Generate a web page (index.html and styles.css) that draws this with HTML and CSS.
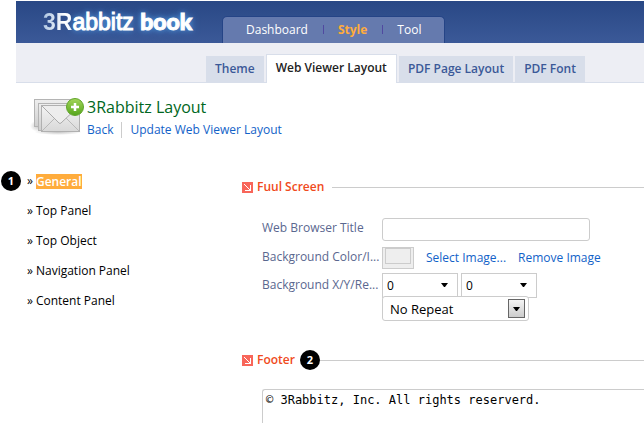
FILE: index.html
```html
<!DOCTYPE html>
<html lang="en">
<head>
<meta charset="utf-8">
<title>3Rabbitz Layout</title>
<link rel="stylesheet" href="styles.css">
</head>
<body>
<header class="masthead">
  <div class="logo"><span class="logo-mark">3R</span><span class="logo-name">abbitz</span> <span class="logo-product">book</span></div>
  <nav class="main-nav" aria-label="Main">
    <a href="#">Dashboard</a>
    <a href="#" class="current">Style</a>
    <a href="#">Tool</a>
  </nav>
</header>
<nav class="tabs" aria-label="Style">
  <a href="#">Theme</a>
  <a href="#" class="active">Web Viewer Layout</a>
  <a href="#">PDF Page Layout</a>
  <a href="#">PDF Font</a>
</nav>
<section class="title">
  <svg class="title-icon" width="56" height="40" viewBox="0 0 56 40" aria-hidden="true">
    <defs>
      <linearGradient id="paper" x1="0" y1="0" x2="0" y2="1"><stop offset="0" stop-color="#eee"/><stop offset="1" stop-color="#cfcfcf"/></linearGradient>
      <linearGradient id="fold" x1="0" y1="0" x2="0" y2="1"><stop offset="0" stop-color="#f4f4f4"/><stop offset="1" stop-color="#d8d8d8"/></linearGradient>
      <linearGradient id="plus" x1="0" y1="0" x2="0" y2="1"><stop offset="0" stop-color="#a4d65a"/><stop offset="1" stop-color="#55a51c"/></linearGradient>
      <radialGradient id="shade"><stop offset="0" stop-color="#999" stop-opacity=".6"/><stop offset="1" stop-color="#999" stop-opacity="0"/></radialGradient>
    </defs>
    <ellipse cx="9" cy="30" rx="9" ry="6" fill="url(#shade)"/>
    <ellipse cx="28" cy="36" rx="24" ry="3" fill="url(#shade)"/>
    <rect x="4.500" y="3.500" width="39" height="27" fill="url(#paper)" stroke="#b4b4b4"/>
    <rect x="8.500" y="7.500" width="39" height="27" fill="url(#paper)" stroke="#b4b4b4"/>
    <rect x="11.500" y="9.500" width="38" height="26" fill="url(#fold)" stroke="#b0b0b0"/>
    <path d="M12 35L25 22M49 35L36 22" stroke="#b8b8b8" fill="none"/>
    <path d="M12 10L29 27Q30 28 31 27L49 10" stroke="#aaa" fill="#ededed"/>
    <circle cx="45" cy="11" r="8.500" fill="url(#plus)" stroke="#61a52b"/>
    <path d="M45 7v8M41 11h8" stroke="#fff" stroke-width="2.500"/>
  </svg>
  <div>
    <h1>3Rabbitz Layout</h1>
    <div class="actions"><a href="#">Back</a><a href="#">Update Web Viewer Layout</a></div>
  </div>
</section>
<main class="content">
  <nav class="side" aria-label="Sections">
    <ul>
      <li class="selected"><span class="badge badge-side">1</span><a href="#">General</a></li>
      <li><a href="#">Top Panel</a></li>
      <li><a href="#">Top Object</a></li>
      <li><a href="#">Navigation Panel</a></li>
      <li><a href="#">Content Panel</a></li>
    </ul>
  </nav>
  <form class="settings">
    <h2>
      <svg width="11" height="11" viewBox="0 0 11 11" shape-rendering="crispEdges" aria-hidden="true"><path fill="#f8665a" d="M0 0h11v11H0z"/><path fill="#fff" d="M2 2h1v1H2zM3 3h1v1H3zM4 4h1v1H4zM5 5h1v1H5zM6 6h1v1H6zM7 7h1v1H7zM8 3h1v6H8zM3 8h5v1H3z"/></svg>
      <span>Fuul Screen</span>
    </h2>
    <div class="fields">
      <label for="browser-title">Web Browser Title</label>
      <input id="browser-title" class="text" type="text">
      <label for="bg-color">Background Color/I...</label>
      <div class="image-row">
        <button id="bg-color" class="swatch" type="button" aria-label="Background color"><span></span></button>
        <a href="#">Select Image...</a>
        <a href="#">Remove Image</a>
      </div>
      <label for="bg-x">Background X/Y/Re...</label>
      <div class="position">
        <div class="pair">
          <div class="combo"><select id="bg-x"><option>0</option></select><svg width="7" height="4" viewBox="0 0 7 4" aria-hidden="true"><path d="M0 0h7L4 4H3z"/></svg></div>
          <div class="combo"><select aria-label="Background Y"><option>0</option></select><svg width="7" height="4" viewBox="0 0 7 4" aria-hidden="true"><path d="M0 0h7L4 4H3z"/></svg></div>
        </div>
        <div class="combo repeat"><select aria-label="Background repeat"><option>No Repeat</option></select><span class="drop"><svg width="7" height="4" viewBox="0 0 7 4" aria-hidden="true"><path d="M0 0h7L4 4H3z"/></svg></span></div>
      </div>
    </div>
    <h2 class="footer-heading">
      <svg width="11" height="11" viewBox="0 0 11 11" shape-rendering="crispEdges" aria-hidden="true"><path fill="#f8665a" d="M0 0h11v11H0z"/><path fill="#fff" d="M2 2h1v1H2zM3 3h1v1H3zM4 4h1v1H4zM5 5h1v1H5zM6 6h1v1H6zM7 7h1v1H7zM8 3h1v6H8zM3 8h5v1H3z"/></svg>
      <span>Footer</span><span class="badge">2</span>
    </h2>
    <textarea aria-label="Footer" rows="2">© 3Rabbitz, Inc. All rights reserverd.</textarea>
  </form>
</main>
</body>
</html>
```
FILE: styles.css
```css
* { box-sizing: border-box; }
body {
  display: flex;
  flex-direction: column;
  height: 100vh;
  margin: 0;
  padding: 1px 0 0 16px;
  overflow: hidden;
  background: #fff;
  color: #000;
  font: 12px/20px "Open Sans", "Noto Sans", sans-serif;
}
a { color: #1262c8; text-decoration: none; }

.masthead {
  display: flex;
  flex: none;
  align-items: flex-end;
  height: 42px;
  padding-left: 27px;
  background: linear-gradient(#294885, #3b5998);
}
.logo {
  width: 179px;
  padding-bottom: 8px;
  color: #fff;
  font: 23px/26px "Liberation Sans", sans-serif;
  white-space: nowrap;
  text-shadow: 0 0 5px #4f95dc, 0 0 8px #4f95dc;
}
.logo-mark {
  font-weight: bold;
  color: transparent;
  background: linear-gradient(100deg, #a5c0e0, #fff 70%);
  background-clip: text;
  text-shadow: none;
}
.logo-name { -webkit-text-stroke: 1px #fff; }
.logo-product { font: 900 23px/24px Lato, sans-serif; -webkit-text-stroke: 1px #fff; }
.main-nav {
  display: flex;
  height: 27px;
  padding: 0 8px;
  border: 1px solid #254486;
  border-bottom: 0;
  border-radius: 5px 5px 0 0;
  background: #657aae;
}
.main-nav a { position: relative; padding: 3px 15px; color: #fff; }
.main-nav a + a::before {
  content: "";
  position: absolute;
  left: 0;
  top: 8px;
  height: 9px;
  border-left: 1px solid #5049a0;
}
.main-nav .current { color: #ffac3c; font-weight: bold; }

.tabs {
  display: flex;
  flex: none;
  align-items: flex-end;
  gap: 2px;
  height: 40px;
  padding-left: 190px;
  border-bottom: 1px solid #d8deea;
  background: #edeef4;
}
.tabs a {
  height: 26px;
  padding: 0 9px;
  background: #d8deea;
  color: #3b5998;
  font-weight: 600;
  line-height: 26px;
  white-space: nowrap;
}
.tabs .active {
  height: 29px;
  margin-bottom: -1px;
  border: 1px solid #d8deea;
  border-bottom: 0;
  background: #fff;
  color: #222;
}

.title { display: flex; gap: 1px; padding: 13px 0 0 14px; }
.title h1 { margin: 0; color: #006621; font-size: 16px; font-weight: normal; line-height: 22px; }
.actions { display: flex; align-items: center; line-height: 24px; }
.actions a + a { margin-left: 8px; padding-left: 8px; border-left: 1px solid #ccc; line-height: 16px; }

.content { display: grid; flex: 1; min-height: 0; grid-template-columns: 226px 1fr; grid-template-rows: 100%; padding-top: 29px; }
.side ul { margin: 0; padding: 0; list-style: none; }
.side li { position: relative; display: flex; gap: 3px; height: 30px; padding-left: 11px; }
.side li::before { content: "»"; }
.side a { color: #000; }
.side .selected a { height: 15px; margin-top: 3px; background: #ffac3c; color: #fff; font-weight: 600; line-height: 15px; }
.badge {
  width: 20px;
  height: 20px;
  border-radius: 50%;
  background: #000;
  color: #fff;
  font-size: 11px;
  font-weight: bold;
  line-height: 20px;
  text-align: center;
}
.badge-side { position: absolute; left: -15px; top: 0; }

.settings { display: flex; flex-direction: column; min-height: 0; }
.settings h2 { display: flex; align-items: center; gap: 4px; margin: 6px 0 0; color: #f04a20; font-size: 12px; font-weight: 600; line-height: 20px; }
.settings h2::after { content: ""; flex: 1; margin-left: 4px; border-top: 1px solid #ccc; }
.settings .footer-heading { margin-top: 29px; }
.footer-heading .badge { margin-left: 1px; }
.settings .footer-heading::after { margin-left: -4px; }
.fields { display: grid; grid-template-columns: 114px 1fr; gap: 6px; padding: 21px 0 0 20px; }
.fields label { color: #5a678f; line-height: 20px; white-space: nowrap; }
.fields .text { width: 208px; height: 23px; border: 1px solid #ccc; border-radius: 3px; }
.image-row { display: flex; gap: 12px; height: 22px; line-height: 22px; white-space: nowrap; }
.swatch { width: 32px; height: 22px; padding: 0 2px; border: 1px solid #ccc; background: #eee; }
.swatch span { display: block; width: 26px; height: 16px; margin-bottom: 4px; border: 1px solid #ccc; }
.pair { display: flex; gap: 3px; margin-top: -2px; }
.combo { position: relative; width: 76px; height: 25px; }
.combo select {
  appearance: none;
  width: 100%;
  height: 100%;
  padding: 0 4px;
  border: 1px solid #ccc;
  border-radius: 0;
  background: #fff;
  color: #000;
  font: 12px "Open Sans", sans-serif;
}
.combo > svg { position: absolute; right: 10px; top: 10px; pointer-events: none; }
.combo.repeat { width: 147px; margin-top: -2px; }
.combo.repeat select { padding-left: 7px; border-radius: 3px; font-size: 13px; }
.drop {
  position: absolute;
  right: 4px;
  top: 3px;
  display: grid;
  place-items: center;
  width: 17px;
  height: 19px;
  border: 1px solid #666;
  background: linear-gradient(#f4f4f4, #ccc);
  pointer-events: none;
}
textarea {
  display: block;
  flex: 1;
  min-height: 0;
  margin: 19px 0 0 20px;
  padding: 2px 3px;
  border: 1px solid #ccc;
  border-width: 1px 0 0 1px;
  border-radius: 3px 0 0;
  font: 12px/16px "DejaVu Sans Mono", monospace;
  resize: none;
}
```
